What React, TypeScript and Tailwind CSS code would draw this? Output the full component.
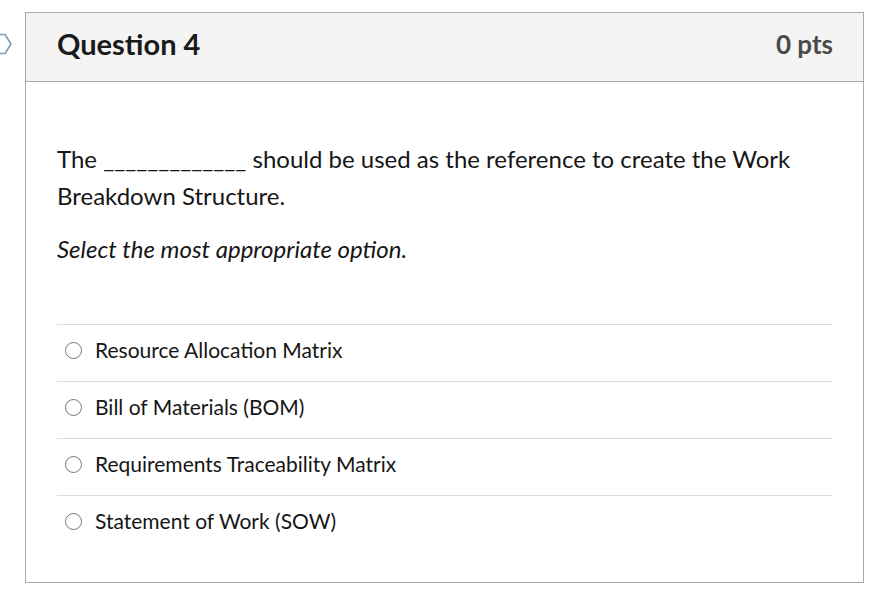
import React from "react";

const options = [
  "Resource Allocation Matrix",
  "Bill of Materials (BOM)",
  "Requirements Traceability Matrix",
  "Statement of Work (SOW)",
];

export default function App() {
  return (
    <div
      className="w-[880px] h-[603px] bg-white flex items-start pt-[12px]"
      style={{ fontFamily: "Lato, 'Open Sans', sans-serif" }}
    >
      <div className="w-[25px] flex justify-start pt-[21px] shrink-0">
        <svg width="13" height="22" viewBox="0 0 13 22" className="block">
          <path
            d="M-8 1.5 H5 L11 11 L5 20.5 H-8"
            fill="none"
            stroke="#7f9bb3"
            strokeWidth="1.6"
            strokeLinejoin="round"
          />
        </svg>
      </div>
      <div className="w-[839px] h-[571px] border border-[#a9a9a9] flex flex-col shrink-0">
        <div className="h-[69px] bg-[#f4f4f4] border-b border-[#a9a9a9] flex items-center justify-between pl-[31px] pr-[30px] pb-[7px]">
          <h2 className="text-[29px] font-bold text-[#1a1a1a] leading-none">Question 4</h2>
          <div className="text-[26px] font-bold text-[#4a4a4a] leading-none">0 pts</div>
        </div>
        <div className="px-[31px] pt-[58px]">
          <p className="text-[24px] leading-[37px] text-[#161616]">
            The _____________ should be used as the reference to create the Work Breakdown Structure.
          </p>
          <p className="text-[24px] leading-[37px] italic text-[#161616] mt-[16px]">
            Select the most appropriate option.
          </p>
          <div className="mt-[57px] flex flex-col">
            {options.map((o) => (
              <div
                key={o}
                className="h-[57px] border-t border-[#dcdcdc] flex items-center pl-[8px] gap-[13px] pb-[6px]"
              >
                <span className="w-[17px] h-[17px] rounded-full border-[1.5px] border-[#777] bg-white shrink-0" />
                <span className="text-[21px] text-[#161616]">{o}</span>
              </div>
            ))}
          </div>
        </div>
      </div>
    </div>
  );
}
